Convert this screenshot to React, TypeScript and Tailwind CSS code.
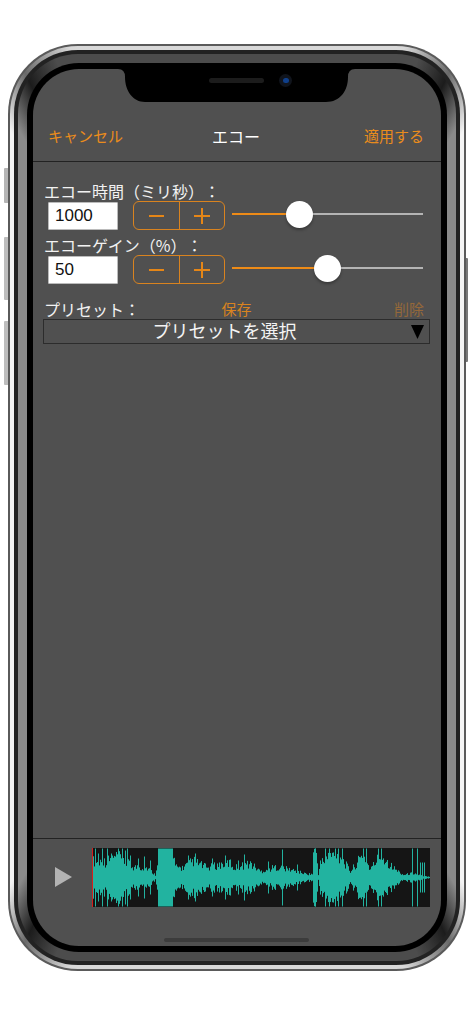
const font = 'font-["Noto_Sans_CJK_JP","Liberation_Sans",sans-serif] [text-spacing-trim:space-all]'

// half height of the wave at a given px offset from the left edge of the clip
const envelope: [number, number][] = [
  [0, 19], [13, 18], [25, 24], [41, 12], [55, 11], [63, 3], [66, 29], [80, 29], [83, 12], [90, 11],
  [101, 19], [115, 11], [125, 14], [138, 17], [141, 11], [158, 16], [168, 7], [184, 12], [198, 9], [214, 4],
  [220, 4], [221, 29], [224, 29], [226, 4], [228, 16], [238, 26], [248, 24], [258, 7], [271, 26], [278, 9],
  [288, 26], [301, 11], [311, 3], [321, 5], [331, 1.5], [338, 1],
]

const spikes: Record<number, number> = {
  3: 29, 6: 24, 10: 29, 15: 29, 19: 24, 26: 29, 30: 29, 33: 27, 35: 29, 38: 22, 46: 19, 52: 21, 58: 17,
  96: 22, 103: 24, 120: 19, 133: 22, 146: 17, 152: 23, 176: 16, 190: 28, 205: 13, 233: 29, 237: 29, 243: 29,
  246: 29, 250: 29, 271: 29, 274: 29, 286: 29, 289: 29, 320: 29, 325: 29, 328: 15, 330: 15, 332: 15,
}

function halfHeight(x: number) {
  let h = 1
  for (let i = 0; i < envelope.length - 1; i++) {
    const [x0, h0] = envelope[i]
    const [x1, h1] = envelope[i + 1]
    if (x >= x0 && x <= x1) h = h0 + ((h1 - h0) * (x - x0)) / (x1 - x0)
  }
  const jitter = Math.abs(Math.sin(x * 12.9898) * 43758.5453) % 1
  const burst = x >= 66 && x <= 80
  return Math.min(29.5, spikes[x] ?? (burst ? h : h * (0.55 + jitter * 0.62)))
}

const wavePath = Array.from({ length: 338 }, (_, x) => {
  const h = halfHeight(x)
  return `M${x + 0.5} ${29.5 - h}V${29.5 + h}`
}).join('')

function Stepper() {
  return (
    <div className="ml-[15px] flex h-[29px] w-[92px] rounded-[6px] border border-[#d9831f]">
      <div className="flex flex-1 items-center justify-center border-r border-[#d9831f]">
        <div className="h-[2px] w-[15px] bg-[#e58617]" />
      </div>
      <div className="relative flex flex-1 items-center justify-center">
        <div className="h-[2px] w-[16px] bg-[#e58617]" />
        <div className="absolute h-[16px] w-[2px] bg-[#e58617]" />
      </div>
    </div>
  )
}

function Slider({ fill, thumb }: { fill: string; thumb: string }) {
  return (
    <div className="relative ml-[7px] flex h-[26px] w-[191px] items-center self-start">
      <div className={`h-[2px] bg-[#ee8b17] ${fill}`} />
      <div className="h-[2px] flex-1 bg-[#b4b4b4]" />
      <div className={`absolute h-[27px] w-[27px] rounded-full bg-white shadow-[0_2px_3px_rgba(0,0,0,0.3)] ${thumb}`} />
    </div>
  )
}

function ParamRow({ label, value, fill, thumb }: { label: string; value: string; fill: string; thumb: string }) {
  return (
    <>
      <div className="h-[20px] whitespace-nowrap text-[16px] leading-[20px] text-[#f2f2f2]">{label}</div>
      <div className="ml-[4px] flex items-center">
        <div className="flex h-[28px] w-[70px] items-center rounded-[1px] border border-[#bbb] bg-white pl-[6px] font-['Liberation_Sans',sans-serif] text-[17px] text-[#111]">
          {value}
        </div>
        <Stepper />
        <Slider fill={fill} thumb={thumb} />
      </div>
    </>
  )
}

export default function App() {
  return (
    <div className={`h-[1024px] w-[473px] overflow-hidden bg-white pt-[44px] pl-[8px] ${font}`}>
      {/* side buttons */}
      <div className="absolute top-[168px] left-[4px] h-[35px] w-[4px] rounded-l-[1px] bg-[#b5b5b5]" />
      <div className="absolute top-[237px] left-[4px] h-[63px] w-[4px] rounded-l-[1px] bg-[#bdbdbd]" />
      <div className="absolute top-[321px] left-[4px] h-[64px] w-[4px] rounded-l-[1px] bg-[#bdbdbd]" />
      <div className="absolute top-[258px] left-[466px] h-[104px] w-[2px] rounded-r-[1px] bg-[#777]" />

      {/* phone body rings */}
      <div className="h-[927px] w-[458px] rounded-[70px] bg-[#5a5a5a] p-[2px]">
        <div className="h-full rounded-[68px] bg-[conic-gradient(#d8d8d8_0deg,#d8d8d8_20deg,#6a6a6a_26deg,#f4f4f4_31deg,#f4f4f4_149deg,#6a6a6a_154deg,#d8d8d8_160deg,#d8d8d8_200deg,#6a6a6a_206deg,#f4f4f4_211deg,#f4f4f4_329deg,#6a6a6a_334deg,#d8d8d8_340deg)] p-[4px]">
          <div className="h-full rounded-[64px] bg-[#222] p-[4px]">
            <div className="h-full rounded-[60px] bg-[conic-gradient(#4c4c4c_0deg,#4c4c4c_22deg,#1c1c1c_26deg,#8a8a8a_30deg,#8a8a8a_150deg,#1c1c1c_154deg,#4c4c4c_158deg,#4c4c4c_202deg,#1c1c1c_206deg,#8a8a8a_210deg,#8a8a8a_330deg,#1c1c1c_334deg,#4c4c4c_338deg)] p-[9px]">
              <div className="h-full rounded-[52px] bg-black p-[6px]">
                <div className="relative flex h-full flex-col overflow-hidden rounded-[46px] bg-[#505050]">
                  {/* notch */}
                  <svg className="absolute top-0 left-0" width="408" height="34" viewBox="0 0 408 34">
                    <path d="M85 0Q92 0 92 8C92 22 100 33 112 33H293C307 33 315 22 315 8Q315 0 322 0Z" fill="#000" />
                  </svg>
                  <div className="absolute top-[9px] left-[176px] h-[5px] w-[55px] rounded-full bg-[#1c1c1c]" />
                  <div className="absolute top-[5px] left-[246px] flex h-[13px] w-[13px] items-center justify-center rounded-full bg-[#10141c]">
                    <div className="h-[5px] w-[6px] rounded-full bg-[#0f3f8a]" />
                  </div>

                  <div className="grid h-[93px] shrink-0 grid-cols-3 items-end border-b border-[#222] pr-[17px] pb-[14px] pl-[15px] text-[15px] leading-[22px] whitespace-nowrap text-[#ea8c1c]">
                    <span>キャンセル</span>
                    <span className="text-center text-[16px] text-white">エコー</span>
                    <span className="text-right">適用する</span>
                  </div>

                  <div className="flex flex-1 flex-col pt-[19px] pl-[11px]">
                    <ParamRow label="エコー時間（ミリ秒）：" value="1000" fill="w-[67px]" thumb="left-[54px]" />
                    <div className="h-[5px]" />
                    <ParamRow label="エコーゲイン（%）：" value="50" fill="w-[95px]" thumb="left-[82px]" />
                    <div className="mt-[15px] flex h-[20px] w-[380px] items-center justify-between text-[15px] leading-[20px]">
                      <span className="w-[120px] text-[16px] text-[#f2f2f2]">プリセット：</span>
                      <span className="mr-[85px] text-[#d9831f]">保存</span>
                      <span className="text-[#94683a]">削除</span>
                    </div>
                    <div className="relative -ml-[1px] flex h-[25px] w-[387px] items-center justify-center border border-[#2c2c2c] pr-[24px] pb-[2px] text-[18px] leading-[21px] text-[#f4f4f4]">
                      プリセットを選択
                      <svg className="absolute top-[5px] right-[5px]" width="13" height="14" viewBox="0 0 13 14">
                        <path d="M0 0H13L6.5 14Z" fill="#000" />
                      </svg>
                    </div>
                  </div>

                  <div className="relative flex h-[108px] shrink-0 border-t border-[#222] pt-[9px] pl-[59px]">
                    <svg className="absolute top-[28px] left-[22px]" width="17" height="20" viewBox="0 0 17 20">
                      <path d="M0 0L17 10L0 20Z" fill="#b3b3b3" />
                    </svg>
                    <svg width="338" height="59" viewBox="0 0 338 59" className="bg-[#151515]">
                      <path d={wavePath} stroke="#22b3a0" strokeWidth="1" fill="none" />
                      <rect x="0" y="0" width="1" height="59" fill="#d4201c" />
                    </svg>
                    <div className="absolute top-[99px] left-[131px] h-[4px] w-[145px] rounded-full bg-[#3c3c3c]" />
                  </div>
                </div>
              </div>
            </div>
          </div>
        </div>
      </div>
    </div>
  )
}
